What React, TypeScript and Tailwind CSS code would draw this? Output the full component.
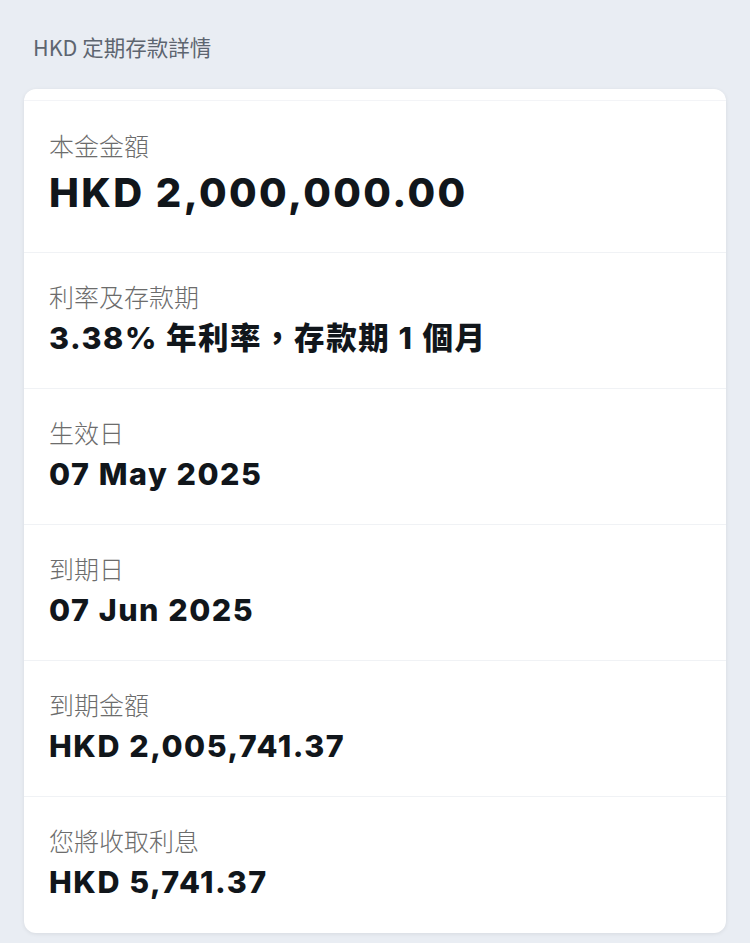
import React from "react";

const rows: { label: string; value: React.ReactNode }[] = [
  {
    label: "利率及存款期",
    value: (
      <>
        3.38% 年利率，存款期 1<span className="ml-[9px]">個月</span>
      </>
    ),
  },
  { label: "生效日", value: "07 May 2025" },
  { label: "到期日", value: "07 Jun 2025" },
  { label: "到期金額", value: "HKD 2,005,741.37" },
  { label: "您將收取利息", value: "HKD 5,741.37" },
];

const labelFont = { fontFamily: '"Noto Sans CJK TC", "Noto Sans", sans-serif' };
const valueFont = { fontFamily: 'Inter, "Noto Sans CJK TC", sans-serif' };

export default function App() {
  return (
    <div className="min-h-[943px] w-[750px] bg-[#e9edf3]">
      <div className="px-[33px] pt-[32px] pb-[27px] text-[21.5px] leading-[30px] text-[#5d6570]" style={labelFont}>
        HKD 定期存款詳情
      </div>
      <div className="mx-[24px] rounded-[12px] bg-white shadow-[0_1px_4px_rgba(0,0,0,0.08)] overflow-hidden">
        <div className="border-b border-[#f0f2f5] pt-[11px]">
          <div className="px-[25px] pt-[28px] pb-[35px] border-t border-[#f3f4f7]">
            <div className="text-[25px] leading-[32px] text-[#6c6c6c] font-light" style={labelFont}>本金金額</div>
            <div className="mt-[8px] text-[40px] leading-[48px] font-extrabold tracking-[0.06em] text-[#11161b]" style={valueFont}>HKD 2,000,000.00</div>
          </div>
        </div>
        {rows.map((r, i) => (
          <div
            key={r.label}
            className={
              i < rows.length - 1
                ? "px-[25px] pt-[27px] pb-[28px] border-b border-[#f0f2f5]"
                : "px-[25px] pt-[27px] pb-[29px]"
            }
          >
            <div className="text-[25px] leading-[32px] text-[#6c6c6c] font-light" style={labelFont}>{r.label}</div>
            <div className="mt-[4px] text-[30.5px] leading-[44px] font-extrabold tracking-[0.05em] text-[#11161b]" style={valueFont}>{r.value}</div>
          </div>
        ))}
      </div>
    </div>
  );
}
